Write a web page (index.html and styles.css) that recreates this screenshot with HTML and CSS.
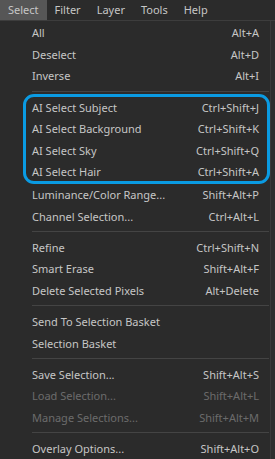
FILE: index.html
```html
<!DOCTYPE html>
<html lang="en">
<head>
    <meta charset="UTF-8">
    <meta name="viewport" content="width=device-width, initial-scale=1.0">
    <title>Select Menu</title>
    <link rel="stylesheet" href="styles.css">
</head>
<body>
    <!-- Menu Bar -->
    <div class="menubar">
        <span class="menubar-item active">Select</span>
        <span class="menubar-item">Filter</span>
        <span class="menubar-item">Layer</span>
        <span class="menubar-item">Tools</span>
        <span class="menubar-item">Help</span>
    </div>

    <!-- Select Dropdown -->
    <div class="menu">
        <div class="menu-item"><span>All</span><span>Alt+A</span></div>
        <div class="menu-item"><span>Deselect</span><span>Alt+D</span></div>
        <div class="menu-item"><span>Inverse</span><span>Alt+I</span></div>
        <div class="separator"></div>

        <!-- AI tools (highlighted) -->
        <div class="ai-group">
            <div class="menu-item"><span>AI Select Subject</span><span>Ctrl+Shift+J</span></div>
            <div class="menu-item"><span>AI Select Background</span><span>Ctrl+Shift+K</span></div>
            <div class="menu-item"><span>AI Select Sky</span><span>Ctrl+Shift+Q</span></div>
            <div class="menu-item"><span>AI Select Hair</span><span>Ctrl+Shift+A</span></div>
        </div>

        <div class="menu-item"><span>Luminance/Color Range...</span><span>Shift+Alt+P</span></div>
        <div class="menu-item"><span>Channel Selection...</span><span>Ctrl+Alt+L</span></div>
        <div class="separator"></div>

        <div class="menu-item"><span>Refine</span><span>Ctrl+Shift+N</span></div>
        <div class="menu-item"><span>Smart Erase</span><span>Shift+Alt+F</span></div>
        <div class="menu-item"><span>Delete Selected Pixels</span><span>Alt+Delete</span></div>
        <div class="separator"></div>

        <div class="menu-item"><span>Send To Selection Basket</span><span></span></div>
        <div class="menu-item"><span>Selection Basket</span><span></span></div>
        <div class="separator"></div>

        <div class="menu-item"><span>Save Selection...</span><span>Shift+Alt+S</span></div>
        <div class="menu-item disabled"><span>Load Selection...</span><span>Shift+Alt+L</span></div>
        <div class="menu-item disabled"><span>Manage Selections...</span><span>Shift+Alt+M</span></div>
        <div class="separator"></div>

        <div class="menu-item"><span>Overlay Options...</span><span>Shift+Alt+O</span></div>
    </div>
</body>
</html>
```

FILE: styles.css
```css
/* General Reset */
* {
    margin: 0;
    padding: 0;
    box-sizing: border-box;
}

body {
    background-color: #2e2e2e;
    font-family: 'Noto Sans', 'Open Sans', sans-serif;
    font-size: 11px;
    color: #c6c6c6;
    overflow: hidden;
}

/* Menu Bar */
.menubar {
    display: flex;
    height: 21px;
    background-color: #2b2b2b;
    border-bottom: 1px solid #3d3d3d;
}

.menubar-item {
    line-height: 20px;
    padding: 0 8px;
    font-size: 11px;
}

.menubar-item.active {
    background-color: #565656;
}

/* Dropdown */
.menu {
    width: 271px;
    padding-top: 1px;
    background-color: #2b2b2b;
    border-right: 1px solid #3a3a3a;
}

.menu-item {
    display: flex;
    justify-content: space-between;
    align-items: center;
    height: 21.6px;
    padding: 0 11px 0 32px;
}

.menu-item.disabled {
    color: #6b6b6b;
}

.separator {
    height: 1px;
    background-color: #444;
    margin: 4px 1px 4.5px 32px;
}

/* Highlight ring around AI items */
.ai-group {
    position: relative;
    margin-bottom: 1px;
}

.ai-group::after {
    content: "";
    position: absolute;
    top: -2px;
    bottom: -1px;
    left: 23px;
    right: 0;
    border: 3px solid #0a9be3;
    border-radius: 11px;
}
```
